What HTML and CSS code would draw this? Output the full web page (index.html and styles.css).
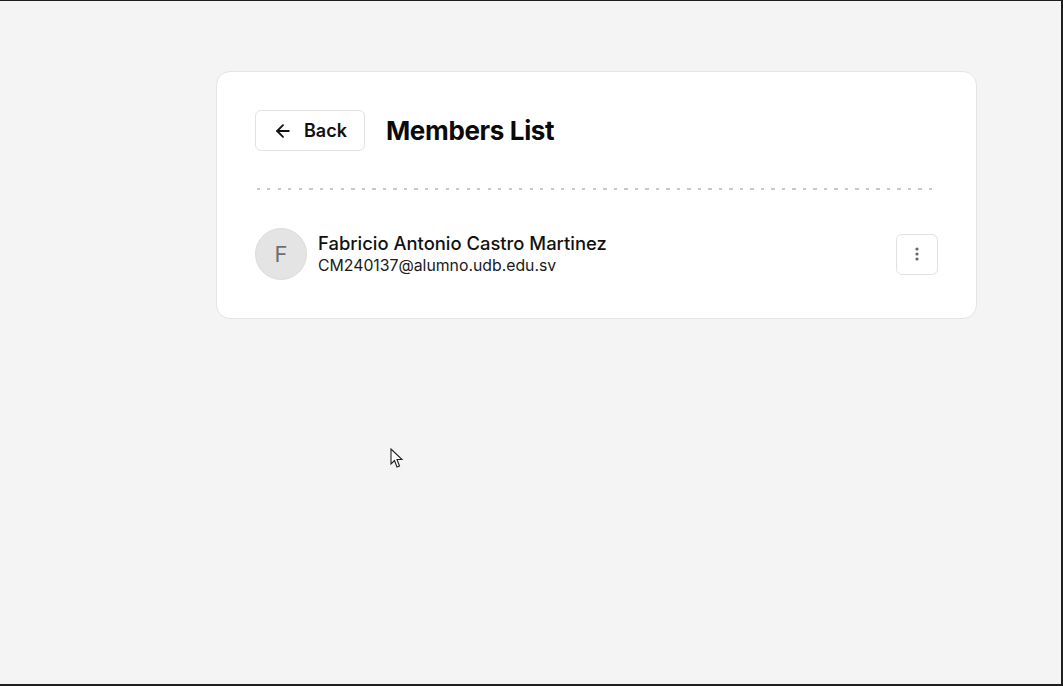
FILE: index.html
```html
<!DOCTYPE html>
<html>
<head>
<meta charset="utf-8">
<link rel="stylesheet" href="styles.css">
</head>
<body>
<div class="frame">
  <main class="card">
    <header class="head">
      <button class="back">
        <svg width="20" height="20" viewBox="0 0 24 24" fill="none" stroke="#111" stroke-width="2.2" stroke-linecap="round" stroke-linejoin="round"><path d="M19 12H5"/><path d="M12 19l-7-7 7-7"/></svg>
        <span>Back</span>
      </button>
      <h1 class="title">Members List</h1>
    </header>
    <div class="divider"></div>
    <div class="member">
      <div class="avatar">F</div>
      <div class="info">
        <div class="name">Fabricio Antonio Castro Martinez</div>
        <div class="email">CM240137@alumno.udb.edu.sv</div>
      </div>
      <button class="more">
        <svg width="4" height="14" viewBox="0 0 4 14"><circle cx="2" cy="2" r="1.6" fill="#666"/><circle cx="2" cy="7" r="1.6" fill="#666"/><circle cx="2" cy="12" r="1.6" fill="#666"/></svg>
      </button>
    </div>
  </main>
  <svg class="cursor" width="14" height="22" viewBox="0 0 14 22"><path d="M1 1 L1 16 L4.5 12.5 L7 19 L9.5 18 L7 11.5 L12 11.5 Z" fill="#fff" stroke="#222" stroke-width="1.1" stroke-linejoin="miter"/></svg>
</div>
</body>
</html>
```
FILE: styles.css
```css
* { box-sizing: border-box; }
html, body { margin: 0; padding: 0; }
body {
  width: 1063px;
  height: 686px;
  overflow: hidden;
  font-family: Inter, "Liberation Sans", sans-serif;
  background: #f4f4f4;
}
.frame {
  position: relative;
  width: 1063px;
  height: 686px;
  border-top: 1px solid #1e1e1e;
  border-right: 2px solid #1e1e1e;
  border-bottom: 2px solid #1e1e1e;
  padding: 70px 0 0 216px;
}
.card {
  width: 761px;
  background: #fff;
  border: 1px solid #e4e4e4;
  border-radius: 14px;
  padding: 38px 38px 38px 38px;
}
.head {
  display: flex;
  align-items: center;
  gap: 21px;
}
.back {
  display: flex;
  align-items: center;
  gap: 11px;
  height: 41px;
  width: 110px;
  padding: 0 0 0 17px;
  background: #fff;
  border: 1px solid #e2e2e2;
  border-radius: 6px;
  font-family: inherit;
  font-size: 18px;
  font-weight: 600;
  color: #111;
}
.title {
  margin: 0;
  font-size: 26px;
  font-weight: 700;
  color: #0a0a0a;
  letter-spacing: -0.35px;
}
.divider {
  margin: 37px 0 0 2px;
  height: 2px;
  background-image: repeating-linear-gradient(to right, #c8c8c8 0, #c8c8c8 3px, transparent 3px, transparent 10.5px);
}
.member {
  display: flex;
  align-items: center;
  margin-top: 38px;
}
.avatar {
  width: 52px;
  height: 52px;
  border-radius: 50%;
  background: #e4e4e4;
  border: 1px solid #dcdcdc;
  display: flex;
  align-items: center;
  justify-content: center;
  font-size: 22px;
  color: #6e6e6e;
}
.info {
  flex: 1;
  margin-left: 11px;
  margin-top: -1px;
}
.name {
  font-size: 18.4px;
  font-weight: 500;
  color: #111;
  line-height: 25px;
}
.email {
  font-size: 15.8px;
  color: #1a1a1a;
  line-height: 20px;
}
.more {
  width: 42px;
  height: 41px;
  background: #fff;
  border: 1px solid #e2e2e2;
  border-radius: 6px;
  display: flex;
  align-items: center;
  justify-content: center;
  padding: 0;
}
.cursor {
  position: absolute;
  left: 390px;
  top: 447px;
}
```
